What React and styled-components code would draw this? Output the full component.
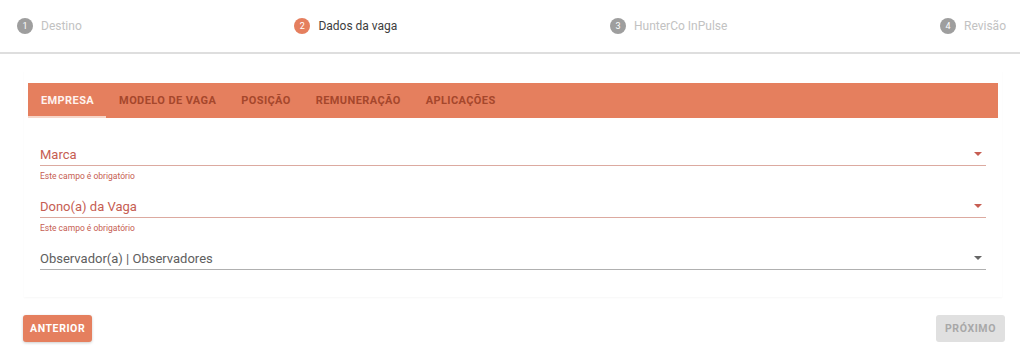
import React from 'react';
import styled, { createGlobalStyle } from 'styled-components';

const GlobalStyle = createGlobalStyle`
  html, body {
    margin: 0;
    padding: 0;
    background: #fff;
    font-family: Roboto, "Noto Sans", Arial, sans-serif;
  }
`;

const ACCENT = '#e57f5e';

const Page = styled.div`
  width: 1024px;
  height: 357px;
  overflow: hidden;
  background: #fff;
`;

const Stepper = styled.div`
  height: 54px;
  display: flex;
  align-items: center;
  justify-content: space-between;
  padding: 0 14px 0 17px;
  margin-right: 4px;
  border-bottom: 2px solid #dedede;
  box-sizing: border-box;
`;

const Step = styled.div`
  display: flex;
  align-items: center;
  gap: 8px;
`;

const StepIcon = styled.span`
  width: 16px;
  height: 16px;
  border-radius: 50%;
  background: ${(p) => (p.active ? ACCENT : '#9e9e9e')};
  color: #fff;
  font-size: 9px;
  display: flex;
  align-items: center;
  justify-content: center;
`;

const StepLabel = styled.span`
  font-size: 12px;
  color: ${(p) => (p.active ? '#3d3d3d' : '#c2c2c2')};
`;

const Card = styled.div`
  margin: 17px 22px 0 24px;
  padding: 12px 4px 0;
  box-shadow: 0 1px 2px rgba(0, 0, 0, 0.035);
  height: 226px;
  box-sizing: border-box;
`;

const TabBar = styled.div`
  height: 35px;
  background: ${ACCENT};
  display: flex;
  align-items: stretch;
`;

const Tab = styled.div`
  padding: 0 12px 0 13px;
  display: flex;
  align-items: center;
  font-size: 11px;
  font-weight: 700;
  letter-spacing: 0.4px;
  color: ${(p) => (p.active ? '#fff3ee' : '#a5472c')};
  box-shadow: ${(p) => (p.active ? 'inset 0 -2px 0 #f6d6c9' : 'none')};
`;

const Fields = styled.div`
  padding: 25px 12px 0;
`;

const Field = styled.div`
  height: 52px;
`;

const FieldRow = styled.div`
  height: 22px;
  display: flex;
  align-items: center;
  justify-content: space-between;
  border-bottom: 1px solid ${(p) => (p.error ? '#dcaaa0' : '#b0b0b0')};
  padding-right: 4px;
`;

const FieldLabel = styled.span`
  font-size: 13px;
  color: ${(p) => (p.error ? '#c65d52' : '#5e5e5e')};
`;

const Arrow = styled.span`
  width: 0;
  height: 0;
  border-left: 4px solid transparent;
  border-right: 4px solid transparent;
  border-top: 4px solid ${(p) => (p.error ? '#c65d52' : '#666')};
`;

const Helper = styled.div`
  margin-top: 5px;
  font-size: 8.5px;
  color: #c65d52;
`;

const Footer = styled.div`
  display: flex;
  justify-content: space-between;
  padding: 18px 19px 0 23px;
`;

const Button = styled.button`
  height: 27px;
  padding: 0 ${(p) => (p.disabled ? '9px' : '7px')};
  border: none;
  border-radius: 3px;
  font-family: Roboto, Arial, sans-serif;
  font-size: 10.5px;
  font-weight: 700;
  letter-spacing: 0.6px;
  background: ${(p) => (p.disabled ? '#e0e0e0' : ACCENT)};
  color: ${(p) => (p.disabled ? '#a8a8a8' : '#fff')};
  box-shadow: ${(p) => (p.disabled ? 'none' : '0 1px 3px rgba(0,0,0,0.2)')};
`;

const steps = ['Destino', 'Dados da vaga', 'HunterCo InPulse', 'Revisão'];
const tabs = ['Empresa', 'Modelo de vaga', 'Posição', 'Remuneração', 'Aplicações'];
const fields = [
  { label: 'Marca', error: true },
  { label: 'Dono(a) da Vaga', error: true },
  { label: 'Observador(a) | Observadores', error: false },
];

export default function App() {
  return (
    <Page>
      <GlobalStyle />
      <Stepper>
        {steps.map((s, i) => (
          <Step key={s}>
            <StepIcon active={i === 1}>{i + 1}</StepIcon>
            <StepLabel active={i === 1}>{s}</StepLabel>
          </Step>
        ))}
      </Stepper>
      <Card>
        <TabBar>
          {tabs.map((t, i) => (
            <Tab key={t} active={i === 0}>{t.toUpperCase()}</Tab>
          ))}
        </TabBar>
        <Fields>
          {fields.map((f) => (
            <Field key={f.label}>
              <FieldRow error={f.error}>
                <FieldLabel error={f.error}>{f.label}</FieldLabel>
                <Arrow error={f.error} />
              </FieldRow>
              {f.error && <Helper>Este campo é obrigatório</Helper>}
            </Field>
          ))}
        </Fields>
      </Card>
      <Footer>
        <Button>ANTERIOR</Button>
        <Button disabled>PRÓXIMO</Button>
      </Footer>
    </Page>
  );
}
